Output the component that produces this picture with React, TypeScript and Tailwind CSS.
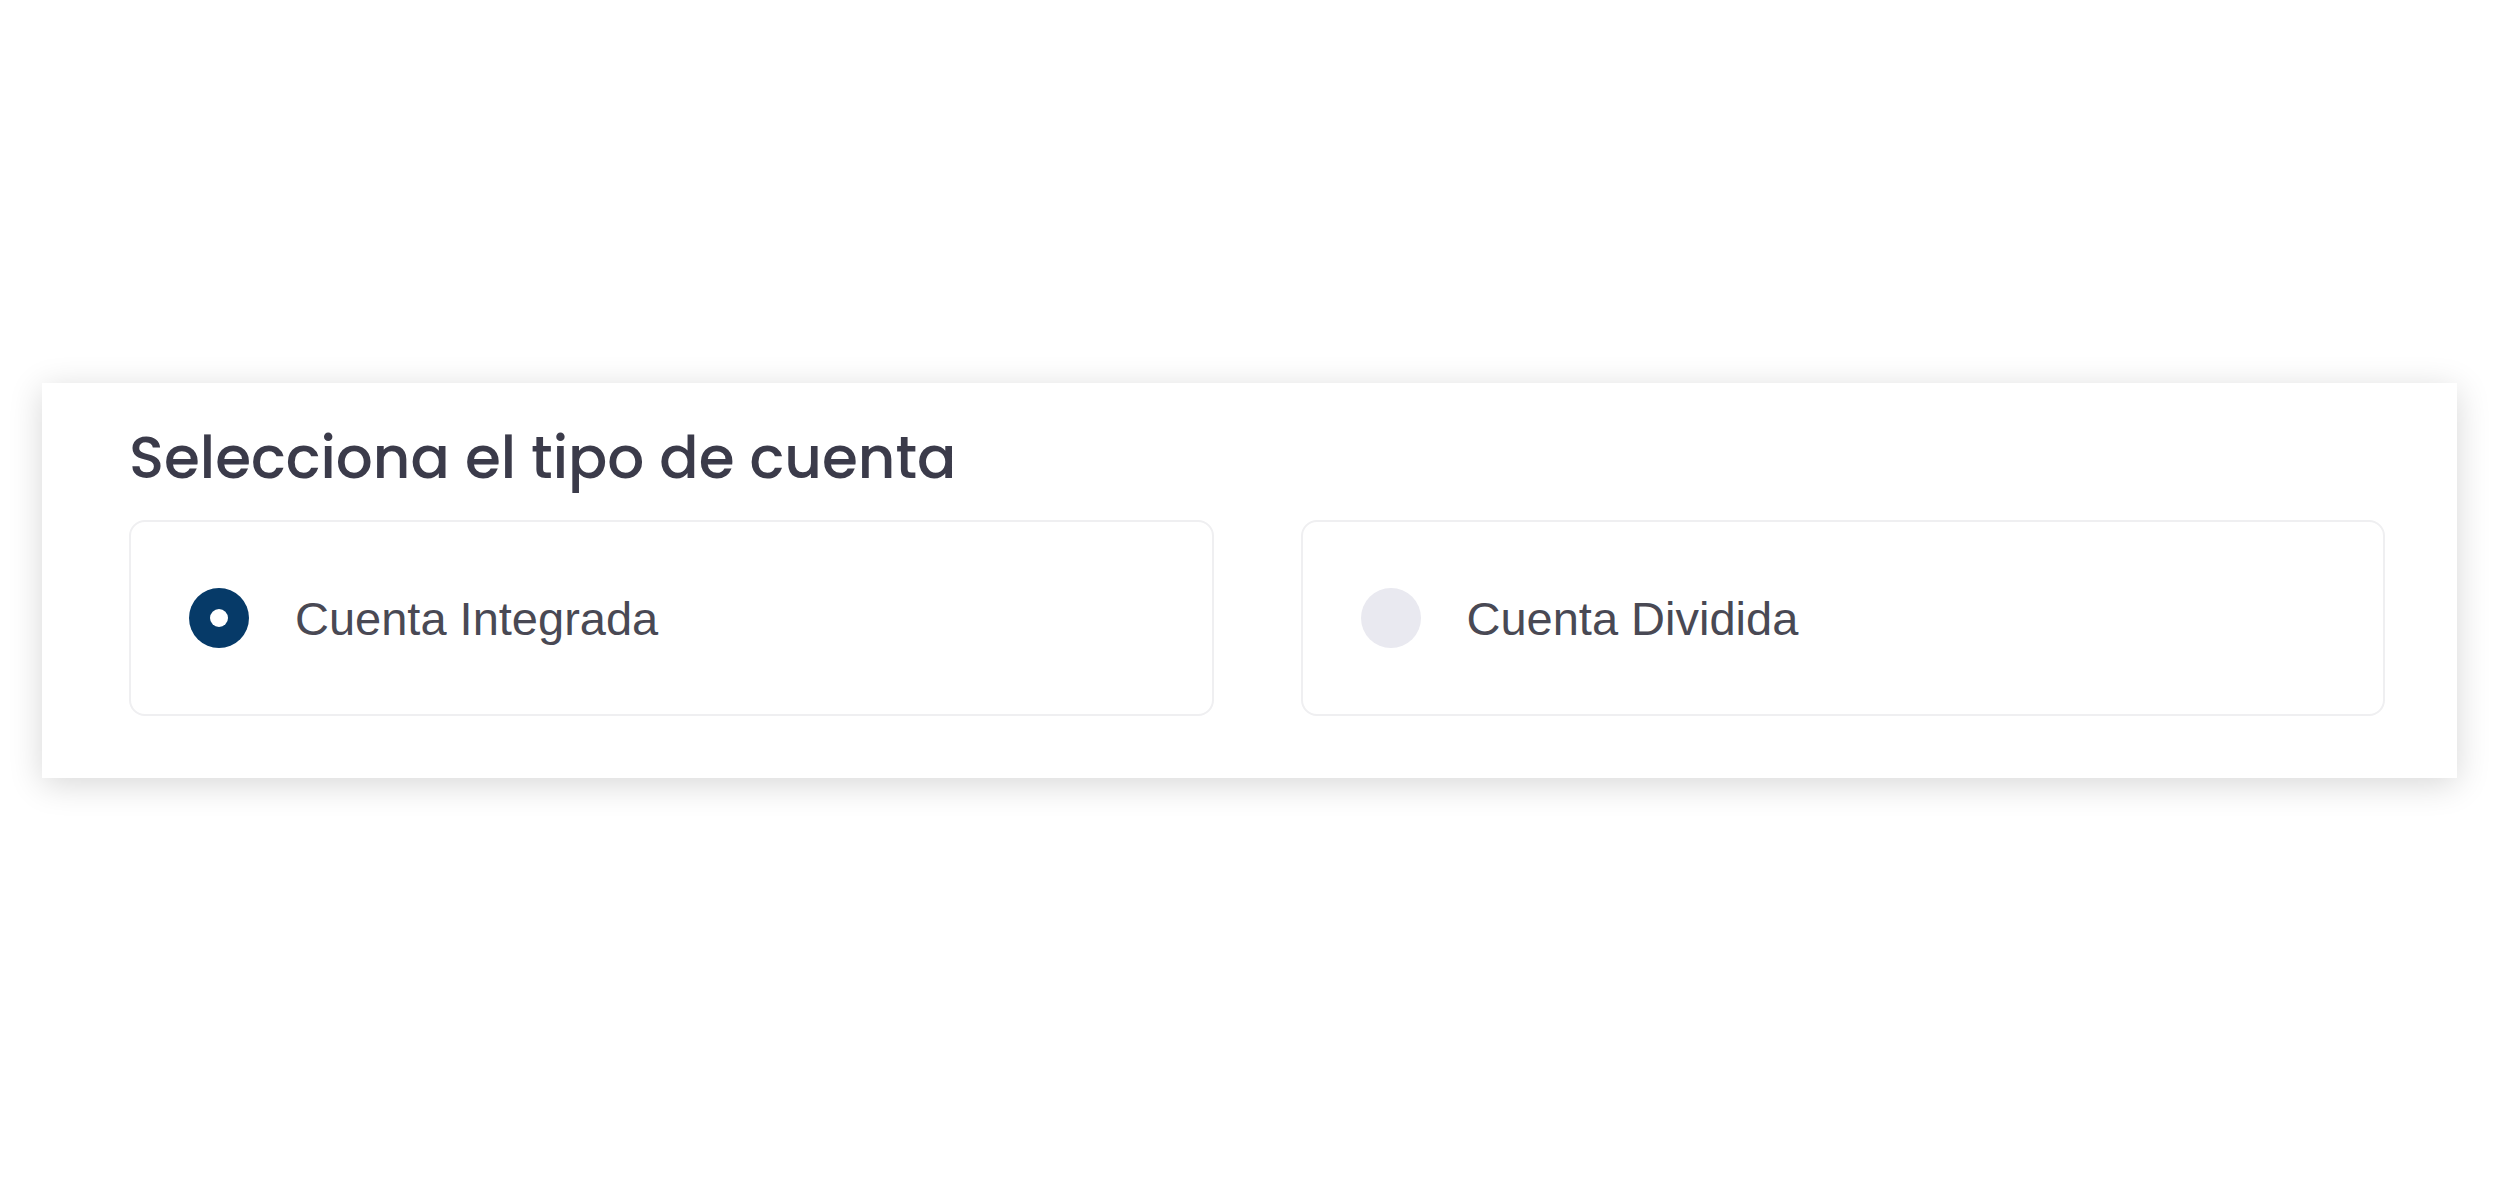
import React, { useState } from "react";

type Option = { id: string; label: string };

const OPTIONS: Option[] = [
  { id: "integrada", label: "Cuenta Integrada" },
  { id: "dividida", label: "Cuenta Dividida" },
];

function RadioDot({ checked }: { checked: boolean }) {
  return checked ? (
    <span className="flex h-[60px] w-[60px] shrink-0 items-center justify-center rounded-full bg-[#063a68]">
      <span className="h-[18px] w-[18px] rounded-full bg-white" />
    </span>
  ) : (
    <span className="h-[60px] w-[60px] shrink-0 rounded-full bg-[#e9e9f0]" />
  );
}

export default function App() {
  const [selected, setSelected] = useState("integrada");

  return (
    <div className="min-h-screen w-full bg-white pt-[383px]">
      <div className="ml-[42px] w-[2415px] bg-white pl-[87px] pr-[72px] pt-[43px] pb-[62px] shadow-[0_6px_32px_rgba(0,0,0,0.16)]">
        <h2 className="font-['Poppins','Inter',sans-serif] text-[58px] leading-[64px] font-medium text-[#3b3b4a]">
          Selecciona el tipo de cuenta
        </h2>
        <div className="mt-[30px] grid grid-cols-2 gap-[87px]">
          {OPTIONS.map((opt) => (
            <button
              key={opt.id}
              type="button"
              onClick={() => setSelected(opt.id)}
              className="flex h-[196px] items-center gap-[46px] rounded-[16px] border-2 border-[#efeff1] bg-white pl-[58px] text-left"
            >
              <RadioDot checked={selected === opt.id} />
              <span className="font-['Liberation_Sans',Arial,sans-serif] text-[47px] leading-none text-[#494954]">
                {opt.label}
              </span>
            </button>
          ))}
        </div>
      </div>
    </div>
  );
}
